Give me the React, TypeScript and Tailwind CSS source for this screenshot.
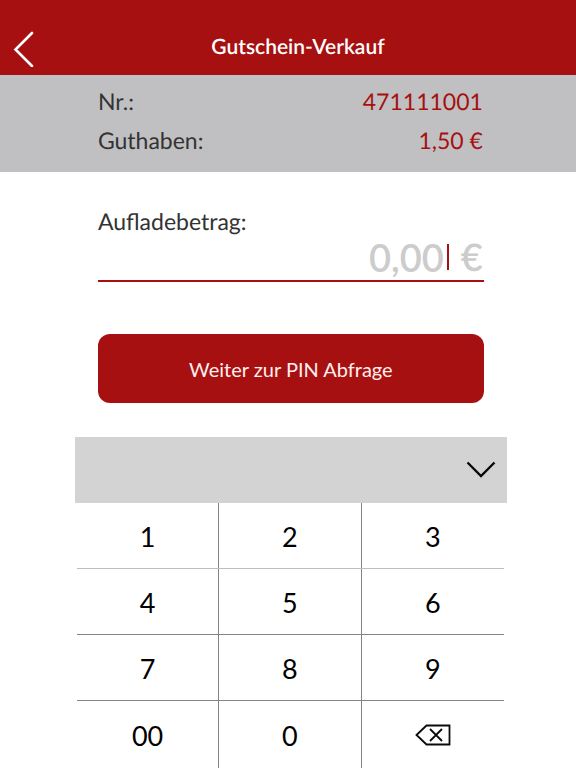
import { useState } from "react";

const rows = [
  ["1", "2", "3"],
  ["4", "5", "6"],
  ["7", "8", "9"],
  ["00", "0", "back"],
];

const rowStyles = [
  "h-[66px] border-b border-[#bdbdbd]",
  "h-[66px] border-b border-[#858585]",
  "h-[66px] border-b border-[#858585]",
  "h-[68px]",
];

function BackspaceIcon() {
  return (
    <svg width="36" height="24" viewBox="0 0 36 24" fill="none" stroke="#0a0a0a" strokeWidth="1.8" aria-hidden="true">
      <path d="M1.5 11 11.5 1.5H34.5V20.5H11.5Z" />
      <path d="M15 5 27 17M27 5 15 17" />
    </svg>
  );
}

export default function App() {
  const [digits, setDigits] = useState("");
  const cents = digits.padStart(3, "0");
  const amount = `${cents.slice(0, -2)},${cents.slice(-2)}`;

  const press = (key: string) =>
    setDigits((d) => (key === "back" ? d.slice(0, -1) : (d + key).replace(/^0+/, "").slice(0, 7)));

  return (
    <div className="min-h-screen overflow-hidden bg-white font-['Lato',sans-serif] text-[#333333] [text-rendering:geometricPrecision]">
      <header className="grid h-[75px] grid-cols-[60px_1fr_40px] items-center bg-[#a71010] pt-5 text-white">
        <button type="button" aria-label="Zurück" className="flex h-12 items-center pl-3">
          <svg width="24" height="38" viewBox="0 0 24 38" fill="none" stroke="currentColor" strokeWidth="2.6" strokeLinecap="round" aria-hidden="true">
            <path d="M20 4 3.5 20.5 20 37" />
          </svg>
        </button>
        <h1 className="pb-0.5 text-center text-[21px] leading-6 font-semibold">Gutschein-Verkauf</h1>
      </header>

      <dl className="flex h-[97px] flex-col gap-[7px] bg-[#c0c0c2] pt-[10px] pr-[16%] pl-[17%] text-[23px] leading-8">
        <div className="flex justify-between">
          <dt>Nr.:</dt>
          <dd className="pr-px text-[#a71010]">471111001</dd>
        </div>
        <div className="flex justify-between">
          <dt>Guthaben:</dt>
          <dd className="pr-px text-[#a71010]">1,50 €</dd>
        </div>
      </dl>

      <main>
        <form className="pt-[33px] pr-[16%] pl-[17%]" onSubmit={(e) => e.preventDefault()}>
          <label htmlFor="amount" className="block text-[23px] leading-8">
            Aufladebetrag:
          </label>
          <div className="flex h-[45px] items-center border-b-2 border-[#a71010] pr-px pb-1 text-[38px] leading-10 font-semibold text-[#cccccc]">
            <input
              id="amount"
              value={amount}
              readOnly
              inputMode="none"
              className="h-10 min-w-0 flex-1 bg-transparent text-right outline-none"
            />
            <span className="mr-3 ml-[3px] h-[26px] w-0.5 bg-[#a71010]" />
            <span>€</span>
          </div>
          <button
            type="submit"
            className="mt-[52px] h-[69px] w-full rounded-xl bg-[#a71010] text-[20px] leading-6 text-[#ffeeee]"
          >
            Weiter zur PIN Abfrage
          </button>
        </form>

        <section aria-label="Ziffernblock" className="mt-[34px] mr-[12%] ml-[13%]">
          <div className="flex h-[66px] items-center justify-end bg-[#d3d3d3] pr-[11px]">
            <button type="button" aria-label="Ziffernblock schließen">
              <svg width="30" height="18" viewBox="0 0 30 18" fill="none" stroke="#0a0a0a" strokeWidth="2.4" aria-hidden="true">
                <path d="M1.5 1.5 15 15 28.5 1.5" />
              </svg>
            </button>
          </div>
          <div className="pr-[3px] pl-0.5">
            {rows.map((row, r) => (
              <div key={r} className={`grid grid-cols-3 ${rowStyles[r]}`}>
                {row.map((key) => (
                  <button
                    key={key}
                    type="button"
                    aria-label={key === "back" ? "Löschen" : undefined}
                    onClick={() => press(key)}
                    className="flex items-center justify-center border-r border-[#858585] pt-0.5 text-[27px] leading-8 text-black last:border-r-0"
                  >
                    {key === "back" ? <BackspaceIcon /> : key}
                  </button>
                ))}
              </div>
            ))}
          </div>
        </section>
      </main>
    </div>
  );
}
